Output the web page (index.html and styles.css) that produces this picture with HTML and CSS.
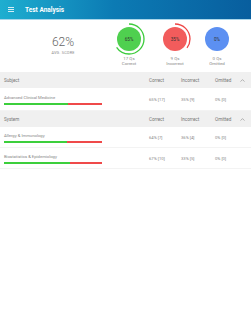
FILE: index.html
```html
<!DOCTYPE html>
<html lang="en">
  <head>
    <meta charset="UTF-8" />
    <title>Test Analysis</title>
    <link rel="stylesheet" href="styles.css">
  </head>
  <body>
    <header class="topbar">
      <span class="menu-icon"><i></i><i></i><i></i></span>
      <h1>Test Analysis</h1>
    </header>

    <section class="summary">
      <div class="avg">
        <div class="avg-value">62%</div>
        <div class="avg-label">AVG. SCORE</div>
      </div>
      <div class="stats">
        <div class="stat">
          <svg width="32" height="32" viewBox="0 0 32 32">
            <circle cx="16" cy="16" r="15" fill="none" stroke="#3ccb3c" stroke-width="1.3"
              stroke-dasharray="61.3 100" transform="rotate(-90 16 16)" />
            <circle cx="16" cy="16" r="12" fill="#4fd04f" />
            <text x="16" y="17.6" text-anchor="middle">65%</text>
          </svg>
          <div class="stat-count">17 Qs</div>
          <div class="stat-name">Correct</div>
        </div>
        <div class="stat">
          <svg width="32" height="32" viewBox="0 0 32 32">
            <circle cx="16" cy="16" r="15" fill="none" stroke="#ee4444" stroke-width="1.3"
              stroke-dasharray="33 100" transform="rotate(-90 16 16)" />
            <circle cx="16" cy="16" r="12" fill="#f25c5c" />
            <text x="16" y="17.6" text-anchor="middle">35%</text>
          </svg>
          <div class="stat-count">9 Qs</div>
          <div class="stat-name">Incorrect</div>
        </div>
        <div class="stat">
          <svg width="24" height="32" viewBox="4 0 24 32">
            <circle cx="16" cy="16" r="12" fill="#5c90f2" />
            <text x="16" y="17.6" text-anchor="middle">0%</text>
          </svg>
          <div class="stat-count">0 Qs</div>
          <div class="stat-name">Omitted</div>
        </div>
      </div>
    </section>

    <section class="group">
      <div class="group-head">
        <span>Subject</span>
        <span>Correct</span>
        <span>Incorrect</span>
        <span>Omitted</span>
        <span class="chev"><svg width="5" height="3" viewBox="0 0 5 3"><path d="M0.5 2.6 L2.5 0.6 L4.5 2.6" fill="none" stroke="#888" stroke-width="0.6"/></svg></span>
      </div>
      <div class="row row-tall">
        <div class="name">
          <div>Advanced Clinical Medicine</div>
          <div class="bar"><b style="width: 65%"></b><i></i></div>
        </div>
        <span>65% [17]</span>
        <span>35% [9]</span>
        <span>0% [0]</span>
      </div>
    </section>

    <section class="group">
      <div class="group-head">
        <span>System</span>
        <span>Correct</span>
        <span>Incorrect</span>
        <span>Omitted</span>
        <span class="chev"><svg width="5" height="3" viewBox="0 0 5 3"><path d="M0.5 2.6 L2.5 0.6 L4.5 2.6" fill="none" stroke="#888" stroke-width="0.6"/></svg></span>
      </div>
      <div class="row">
        <div class="name">
          <div>Allergy &amp; Immunology</div>
          <div class="bar"><b style="width: 64%"></b><i></i></div>
        </div>
        <span>64% [7]</span>
        <span>36% [4]</span>
        <span>0% [0]</span>
      </div>
      <div class="row">
        <div class="name">
          <div>Biostatistics &amp; Epidemiology</div>
          <div class="bar"><b style="width: 67%"></b><i></i></div>
        </div>
        <span>67% [10]</span>
        <span>33% [5]</span>
        <span>0% [0]</span>
      </div>
    </section>
  </body>
</html>
```

FILE: styles.css
```css
* {
  margin: 0;
  padding: 0;
  box-sizing: border-box;
}

body {
  font-family: Roboto, "Liberation Sans", Arial, sans-serif;
  background-color: #fff;
  color: #777;
}

/* top bar */
.topbar {
  display: flex;
  align-items: center;
  height: 20px;
  padding-left: 8px;
  background: linear-gradient(90deg, #1eaed0 0%, #0c7bb4 45%, #085e9e 100%);
  border-bottom: 1px solid #a9d6ea;
}

.menu-icon {
  display: flex;
  flex-direction: column;
  gap: 1px;
  width: 6px;
}

.menu-icon i {
  display: block;
  height: 1px;
  background-color: #d4edf6;
}

.topbar h1 {
  margin-left: 11px;
  font-size: 6.5px;
  font-weight: 700;
  color: #fff;
}

/* summary */
.summary {
  display: flex;
  height: 52px;
  padding-top: 3px;
}

.avg {
  width: 113px;
  padding-left: 13px;
  padding-top: 12px;
  text-align: center;
}

.avg-value {
  font-size: 12px;
  font-weight: 300;
  line-height: 14px;
  color: #666;
}

.avg-label {
  margin-top: 1px;
  font-size: 3.8px;
  letter-spacing: 0.2px;
  color: #888;
}

.stats {
  display: flex;
  gap: 14px;
}

.stat {
  display: flex;
  flex-direction: column;
  align-items: center;
  font-size: 4.4px;
  line-height: 5.5px;
  color: #888;
}

.stat svg {
  display: block;
  margin-bottom: 0.5px;
}

.stat svg text {
  font-family: Roboto, "Liberation Sans", Arial, sans-serif;
  font-size: 4.6px;
  fill: #333;
}

/* tables */
.group-head,
.row {
  display: grid;
  grid-template-columns: 1fr 32px 34px 25px 11px;
  align-items: center;
  padding-left: 4px;
}

.group-head {
  height: 16px;
  font-size: 4.6px;
  color: #777;
  background-color: #f0f0f0;
}

.chev svg {
  display: block;
}

.row {
  height: 21px;
  font-size: 4.2px;
  color: #888;
  border-bottom: 1px solid #f3f3f3;
}

.row-tall {
  height: 23px;
}

.name {
  display: flex;
  flex-direction: column;
  gap: 3.5px;
  padding-top: 1px;
}

.bar {
  display: flex;
  width: 98px;
  height: 1.5px;
}

.bar b {
  display: block;
  background-color: #3ccf3c;
}

.bar i {
  display: block;
  flex: 1;
  background-color: #ef4a4a;
}
```
